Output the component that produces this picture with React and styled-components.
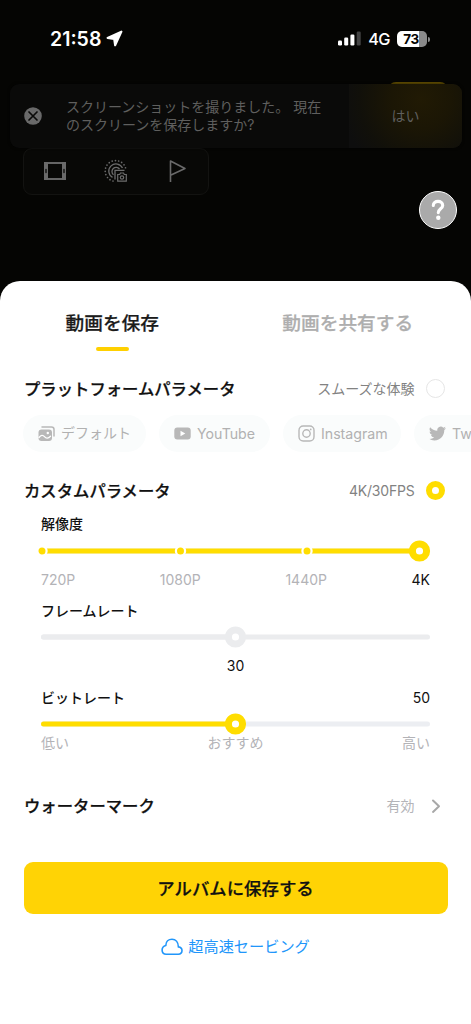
import React from "react";
import styled, { createGlobalStyle } from "styled-components";

const Global = createGlobalStyle`
  * { box-sizing: border-box; }
  body { margin: 0; background: #050503; }
  body, button { font-family: Inter, "Noto Sans CJK JP", sans-serif; }
`;

const Screen = styled.div`
  width: 471px;
  height: 1024px;
  overflow: hidden;
  display: flex;
  flex-direction: column;
  background: #050503;
`;

const Backdrop = styled.header`
  position: relative;
  flex: 0 0 281px;
  display: flex;
  flex-direction: column;
`;

const StatusBar = styled.div`
  height: 84px;
  padding: 26px 44px 0 50px;
  display: flex;
  align-items: flex-start;
  justify-content: space-between;
  color: #fff;
`;

const StatusGroup = styled.div`
  height: 25px;
  display: flex;
  align-items: center;
  gap: ${(p) => p.$gap}px;
`;

const Clock = styled.span`
  font-size: 19.5px;
  font-weight: 600;
`;

const Network = styled.span`
  font-size: 16.3px;
  font-weight: 500;
  letter-spacing: -0.5px;
`;

const Battery = styled.span`
  position: relative;
  width: 30px;
  height: 16px;
  padding-right: 2px;
  border-radius: 5px;
  background: linear-gradient(90deg, #fff 73%, #8b8b8b 73%);
  color: #050503;
  font-size: 13.5px;
  font-weight: 700;
  line-height: 16.5px;
  text-align: center;
  letter-spacing: -0.3px;
  &::after {
    content: "";
    position: absolute;
    right: -3px;
    top: 6px;
    width: 2px;
    height: 5px;
    border-radius: 0 2px 2px 0;
    background: #8b8b8b;
  }
`;

const PeekButton = styled.div`
  position: absolute;
  left: 388px;
  top: 82px;
  width: 60px;
  height: 30px;
  border-radius: 8px;
  background: #5e4b00;
`;

const Toast = styled.div`
  position: relative;
  z-index: 1;
  margin: 0 9px 0 9.5px;
  height: 63.5px;
  display: flex;
  border-radius: 9px;
  overflow: hidden;
  background: #0a0a09;
  box-shadow: 0 0 3px rgba(0, 0, 0, 0.6);
  color: #5f5f5e;
  font-size: 14px;
  line-height: 17.7px;
`;

const ToastIcon = styled.div`
  width: 56.5px;
  padding-left: 14px;
  display: flex;
  align-items: center;
`;

const ToastText = styled.div`
  flex: 1;
  display: flex;
  flex-direction: column;
  justify-content: center;
  white-space: pre;
`;

const ToastAction = styled.div`
  width: 113px;
  display: flex;
  align-items: center;
  justify-content: center;
  background: radial-gradient(circle at 72px 15px, #211a04 0, #1b1605 30px, #11100a 62px, #0e0e0e 80px);
`;

const Toolbar = styled.div`
  margin: 0 0 0 23px;
  width: 186px;
  height: 47px;
  display: flex;
  align-items: center;
  justify-content: space-between;
  padding: 0 19px 1px 18.5px;
  border: 1px solid #131311;
  border-radius: 9px;
  background: #080806;
  svg { display: block; }
`;

const Help = styled.div`
  position: absolute;
  left: 419px;
  top: 190.5px;
  width: 38px;
  height: 38px;
  border: 1.5px solid #fff;
  border-radius: 50%;
  background: #aaa;
  display: flex;
  align-items: center;
  justify-content: center;
`;

const Sheet = styled.main`
  flex: 1;
  background: #fff;
  border-radius: 20px 20px 0 0;
  overflow: hidden;
`;

const Tabs = styled.nav`
  display: flex;
  height: 88px;
  margin-left: -5.5px;
`;

const Tab = styled.div`
  width: 235.5px;
  padding-top: 31px;
  display: flex;
  flex-direction: column;
  align-items: center;
  gap: 11px;
  font-size: 18.7px;
  font-weight: 500;
  -webkit-text-stroke: 0.25px;
  line-height: 24px;
  color: ${(p) => (p.$active ? "#1b1b1b" : "#aeaeae")};
  &::after {
    content: "";
    width: 33px;
    height: 3.5px;
    border-radius: 2px;
    background: ${(p) => (p.$active ? "#ffd000" : "transparent")};
  }
`;

const Row = styled.div`
  height: 39px;
  margin-top: ${(p) => p.$top || 0}px;
  padding: 0 26px 0 24px;
  display: flex;
  align-items: center;
`;

const Heading = styled.h2`
  flex: 1;
  margin: 0;
  font-size: 16.35px;
  line-height: 24px;
  font-weight: 500;
  -webkit-text-stroke: 0.25px;
  color: #111;
`;

const Note = styled.span`
  font-size: 14px;
  line-height: 20px;
  color: ${(p) => p.$tone || "#828282"};
  letter-spacing: ${(p) => p.$track || 0}px;
`;

const Radio = styled.span`
  width: 19px;
  height: 19px;
  margin-left: 11.5px;
  border-radius: 50%;
  border: ${(p) => (p.$on ? "6px solid #ffdd00" : "1px solid #e6e6e6")};
  background: #fff;
`;

const Chips = styled.div`
  height: 37px;
  margin-top: 7px;
  padding-left: 23px;
  display: flex;
  gap: 13px;
`;

const Chip = styled.div`
  flex: 0 0 ${(p) => p.$w}px;
  display: flex;
  align-items: center;
  gap: 6px;
  padding-left: 15px;
  border-radius: 19px;
  background: #fafcfc;
  color: #b1b1b1;
  font-size: 14.2px;
  letter-spacing: -0.03px;
  line-height: 20px;
  white-space: nowrap;
  svg { display: block; flex: none; }
`;

const KanaName = styled.span`
  font-size: 14px;
  margin-top: -1px;
`;

const Group = styled.section`
  padding: 0 41px;
`;

const Label = styled.div`
  height: ${(p) => p.$h}px;
  padding-bottom: 2px;
  display: flex;
  align-items: center;
  justify-content: space-between;
  font-size: 14px;
  font-weight: 500;
  color: #111;
`;

const Track = styled.div`
  height: ${(p) => p.$h}px;
  display: flex;
  align-items: center;
  svg { display: block; overflow: visible; }
`;

const Marks = styled.div`
  height: ${(p) => p.$h}px;
  display: flex;
  align-items: center;
  justify-content: ${(p) => (p.$single ? "center" : "space-between")};
  font-size: 14px;
  line-height: 12px;
  color: #b3b3b7;
`;

const Mark = styled.span`
  color: ${(p) => (p.$active ? "#111" : "inherit")};
  font-weight: 400;
`;

const Save = styled.button`
  display: block;
  width: 424px;
  height: 51.5px;
  margin: 37px 0 0 23.5px;
  padding: 0;
  border: 0;
  border-radius: 9px;
  background: #ffd305;
  color: #111;
  font-size: 17.4px;
  font-weight: 500;
  -webkit-text-stroke: 0.25px;
`;

const Fast = styled.div`
  height: 40px;
  margin-top: 13.5px;
  display: flex;
  align-items: center;
  justify-content: center;
  gap: 5px;
  color: #2196fa;
  font-size: 15.2px;
  line-height: 20px;
  svg { display: block; }
`;

function Slider({ h, value, stops = [], color = "#ffdd00", rest = "#eceef2" }) {
  return (
    <Track $h={h}>
      <svg width="389" height="22">
        <path d="M2.5 11H386.5" stroke={rest} strokeWidth="5" strokeLinecap="round" />
        <path d={`M2.5 11H${value}`} stroke={color} strokeWidth="5" strokeLinecap="round" />
        {stops.map((x) => (
          <circle key={x} cx={x} cy="11" r="4.6" fill={color} stroke="#fff" strokeWidth="2.2" />
        ))}
        <circle cx={value} cy="11" r="7.1" fill="#fff" stroke={color} strokeWidth="7" />
      </svg>
    </Track>
  );
}

const PhotosIcon = () => (
  <svg width="17" height="16" viewBox="0 0 17 16">
    <path d="M4 1h9.500q2.500 0 2.500 2.500V10" fill="none" stroke="#b8b8b8" strokeWidth="1.500" strokeLinecap="round" />
    <rect x="0.500" y="3.500" width="13.500" height="11.500" rx="3" fill="#b8b8b8" />
    <circle cx="9.800" cy="7" r="1.200" fill="#fff" />
    <path d="M1 11.500q3-4 5.500-.8t6-.5" fill="none" stroke="#fff" strokeWidth="1.300" strokeLinecap="round" />
  </svg>
);

const YouTubeIcon = () => (
  <svg width="17" height="13" viewBox="0 0 17 13">
    <rect x="0.300" y="0.500" width="16.400" height="12" rx="3" fill="#b8b8b8" />
    <path d="M6.500 3.700v5.600l4.800-2.800z" fill="#fff" />
  </svg>
);

const InstagramIcon = () => (
  <svg width="17" height="17" viewBox="0 0 17 17" fill="none" stroke="#b8b8b8" strokeWidth="1.400">
    <rect x="1" y="1" width="15" height="15" rx="4.200" />
    <circle cx="8.500" cy="8.500" r="3.700" />
    <circle cx="12.700" cy="4.400" r="0.900" fill="#b8b8b8" stroke="none" />
  </svg>
);

const TwitterIcon = () => (
  <svg width="17" height="17" viewBox="0 0 24 24">
    <path
      fill="#b8b8b8"
      d="M23.950 4.570a10 10 0 0 1-2.820.770 4.960 4.960 0 0 0 2.160-2.720c-.950.550-2 .950-3.130 1.180a4.920 4.920 0 0 0-8.380 4.480A13.930 13.930 0 0 1 1.640 3.160a4.920 4.920 0 0 0 1.520 6.570 4.900 4.900 0 0 1-2.230-.610v.060a4.920 4.920 0 0 0 3.950 4.830 5 5 0 0 1-2.210.080 4.940 4.940 0 0 0 4.600 3.420A9.870 9.870 0 0 1 0 19.540a13.990 13.990 0 0 0 7.550 2.210c9.050 0 14-7.500 14-13.980 0-.210 0-.420-.020-.630a9.940 9.940 0 0 0 2.460-2.550z"
    />
  </svg>
);

export default function App() {
  return (
    <Screen>
      <Global />
      <Backdrop>
        <StatusBar>
          <StatusGroup $gap={5}>
            <Clock>21:58</Clock>
            <svg width="17" height="17" viewBox="0 0 16 16">
              <path d="M14.500 1.500 1.500 7.400l6.200 1 .9 6z" fill="#fff" stroke="#fff" strokeWidth="2" strokeLinejoin="round" />
            </svg>
          </StatusGroup>
          <StatusGroup $gap={7}>
            <svg width="23" height="15" viewBox="0 0 23 15" fill="#fff">
              <rect x="0" y="9.500" width="4" height="5" rx="1.200" />
              <rect x="6.200" y="6.500" width="4" height="8" rx="1.200" />
              <rect x="12.400" y="3.500" width="4" height="11" rx="1.200" />
              <rect x="18.700" y="0.500" width="4" height="14" rx="1.200" fill="#444" />
            </svg>
            <Network>4G</Network>
            <Battery>73</Battery>
          </StatusGroup>
        </StatusBar>
        <PeekButton />
        <Toast>
          <ToastIcon>
            <svg width="18" height="18" viewBox="0 0 18 18">
              <circle cx="9" cy="9" r="8.800" fill="#696969" />
              <path d="m5 5 8 8M13 5l-8 8" stroke="#0a0a09" strokeWidth="1.700" strokeLinecap="round" />
            </svg>
          </ToastIcon>
          <ToastText>
            <span>スクリーンショットを撮りました。 現在</span>
            <span>のスクリーンを保存しますか?</span>
          </ToastText>
          <ToastAction>はい</ToastAction>
        </Toast>
        <Toolbar>
          <svg width="24" height="20" viewBox="0 0 24 20">
            <rect x="2" y="2" width="20" height="16" fill="none" stroke="#6a6a6a" strokeWidth="1.900" />
            <path d="M1 1h4v18H1zM19 1h4v18h-4z" fill="#6a6a6a" />
            <path d="M3 8.500v3M21 8.500v3" stroke="#080806" strokeWidth="1.300" strokeLinecap="round" />
          </svg>
          <svg width="24" height="24" viewBox="0 0 24 24" fill="none" stroke="#6c6c6c">
            <path d="M9 22A10.400 10.400 0 1 1 22 12" strokeWidth="1.700" strokeLinecap="round" strokeDasharray="0 3.300" />
            <path d="M8.500 18.400A7.200 7.200 0 1 1 18.500 9" strokeWidth="1.300" />
            <path d="M9.500 15.800A4.200 4.200 0 1 1 15.500 10" strokeWidth="1.300" />
            <path d="M11 20.500V11.300h9.500" strokeWidth="1.300" />
            <path d="M13.700 15.500h2l.8-1.500h3l.8 1.500h2v6.700h-8.600z" strokeWidth="1.200" />
            <circle cx="18" cy="18.500" r="1.700" strokeWidth="1.200" />
          </svg>
          <svg width="24" height="24" viewBox="0 0 24 24" fill="none" stroke="#6a6a6a" strokeWidth="1.600">
            <path d="M5.500 23V2L20 9.500 5.500 16.300" strokeLinejoin="round" />
          </svg>
        </Toolbar>
        <Help>
          <svg width="16" height="22" viewBox="0 0 16 22">
            <path d="M3.300 6.500C3.300 3.900 5.400 2.400 8 2.400s4.700 1.600 4.700 4c0 3.300-4.400 3.500-4.400 7.200" fill="none" stroke="#fff" strokeWidth="3.100" strokeLinecap="round" />
            <circle cx="8.300" cy="18.700" r="2.200" fill="#fff" />
          </svg>
        </Help>
      </Backdrop>

      <Sheet>
        <Tabs>
          <Tab $active>動画を保存</Tab>
          <Tab>動画を共有する</Tab>
        </Tabs>

        <Row>
          <Heading>プラットフォームパラメータ</Heading>
          <Note>スムーズな体験</Note>
          <Radio />
        </Row>
        <Chips>
          <Chip $w={123}><PhotosIcon /><KanaName>デフォルト</KanaName></Chip>
          <Chip $w={111}><YouTubeIcon />YouTube</Chip>
          <Chip $w={118}><InstagramIcon />Instagram</Chip>
          <Chip $w={110}><TwitterIcon />Twitter</Chip>
        </Chips>

        <Row $top={19}>
          <Heading>カスタムパラメータ</Heading>
          <Note $track={-0.2}>4K/30FPS</Note>
          <Radio $on />
        </Row>
        <Group>
          <Label $h={27}>解像度</Label>
          <Slider h={27} value={378.5} stops={[1, 139.500, 266]} />
          <Marks $h={31}>
            <Mark>720P</Mark>
            <Mark>1080P</Mark>
            <Mark>1440P</Mark>
            <Mark $active>4K</Mark>
          </Marks>
          <Label $h={32}>フレームレート</Label>
          <Slider h={20} value={194.5} color="#ebecee" rest="#ebecee" />
          <Marks $h={38} $single><Mark $active>30</Mark></Marks>
          <Label $h={26}>ビットレート<Mark $active>50</Mark></Label>
          <Slider h={26} value={194.5} />
          <Marks $h={12}>
            <Mark>低い</Mark>
            <Mark>おすすめ</Mark>
            <Mark>高い</Mark>
          </Marks>
        </Group>

        <Row $top={37}>
          <Heading>ウォーターマーク</Heading>
          <Note $tone="#b4b4b8">有効</Note>
          <svg width="30.5" height="16" viewBox="0 0 30.5 16">
            <path d="m18 2.500 6 5.700-6 5.700" fill="none" stroke="#a8a8a8" strokeWidth="2" strokeLinecap="round" strokeLinejoin="round" />
          </svg>
        </Row>

        <Save>アルバムに保存する</Save>
        <Fast>
          <svg width="22" height="18" viewBox="0 0 22 18">
            <path d="M5.200 16.200h12c2.300 0 3.800-1.500 3.800-3.600 0-1.900-1.400-3.400-3.600-3.700C17.300 4.200 14.600 1.200 11 1.200S4.900 3.700 4.800 7.400C2.500 8 1.100 9.700 1.100 12c0 2.500 1.700 4.200 4.100 4.200z" fill="none" stroke="#2196fa" strokeWidth="1.600" />
          </svg>
          <span>超高速セービング</span>
        </Fast>
      </Sheet>
    </Screen>
  );
}
